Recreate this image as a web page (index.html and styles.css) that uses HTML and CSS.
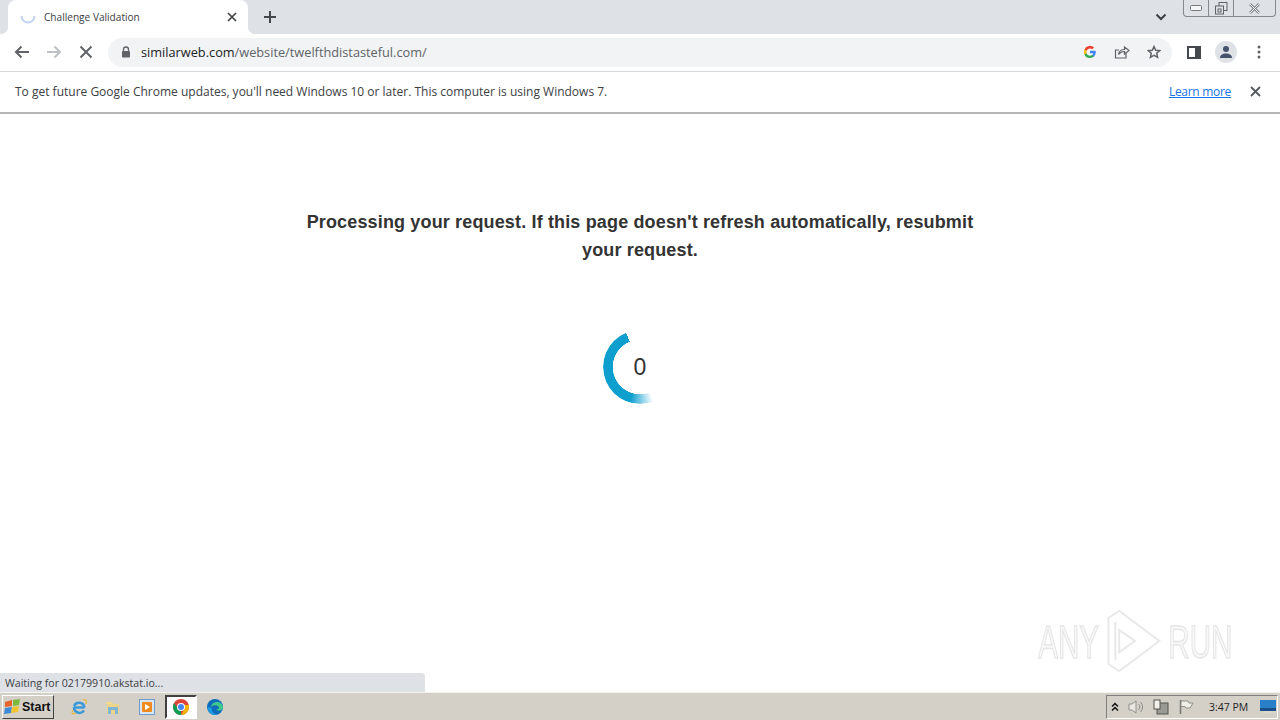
FILE: index.html
```html
<!DOCTYPE html>
<html lang="en">
<head>
  <meta charset="UTF-8" />
  <title>Challenge Validation</title>
  <link rel="stylesheet" href="styles.css">
</head>
<body>
  <div class="tabstrip">
    <div class="tab">
      <svg class="tab-spin" width="16" height="16" viewBox="0 0 16 16"><path d="M1.500 7a6.500 6.500 0 0 0 13 0" fill="none" stroke="#c3d4ee" stroke-width="2"/></svg>
      <span class="tab-title">Challenge Validation</span>
      <svg class="tab-close" width="10" height="10" viewBox="0 0 10 10"><path d="M1 1l8 8M9 1l-8 8" stroke="#3c4043" stroke-width="1.600"/></svg>
    </div>
    <svg class="new-tab" width="14" height="14" viewBox="0 0 14 14"><path d="M7 1v12M1 7h12" stroke="#45484d" stroke-width="2"/></svg>
    <svg class="tab-menu" width="12" height="8" viewBox="0 0 12 8"><path d="M1.500 1.500L6 6l4.500-4.500" fill="none" stroke="#3c4043" stroke-width="2"/></svg>
    <div class="winbtns">
      <div class="winbtn win-min"><svg width="12" height="6" viewBox="0 0 12 6"><rect x=".5" y=".5" width="11" height="5" rx="1" fill="#f4f5f7" stroke="#77797d"/></svg></div>
      <div class="winbtn win-max"><svg width="13" height="13" viewBox="0 0 13 13"><rect x="4" y=".5" width="8" height="8" fill="none" stroke="#5f6368"/><rect x=".5" y="4" width="8" height="8" fill="#dee1e6" stroke="#5f6368"/><rect x="3" y="7" width="3" height="3" fill="none" stroke="#5f6368"/></svg></div>
      <div class="winbtn win-close"><svg width="13" height="11" viewBox="0 0 13 11"><path d="M2 1l9 9M11 1l-9 9" stroke="#85888c" stroke-width="2.600"/><path d="M2 1l9 9M11 1l-9 9" stroke="#eef0f2" stroke-width="1"/></svg></div>
    </div>
  </div>

  <div class="toolbar">
    <svg class="nav-icon" width="16" height="14" viewBox="0 0 16 14"><path d="M15 7H2M7.500 1.500L2 7l5.500 5.500" fill="none" stroke="#5f6368" stroke-width="2"/></svg>
    <svg class="nav-icon" width="16" height="14" viewBox="0 0 16 14"><path d="M1 7h13M8.500 1.500L14 7l-5.500 5.500" fill="none" stroke="#bdc1c6" stroke-width="2"/></svg>
    <svg class="nav-icon" width="14" height="14" viewBox="0 0 14 14"><path d="M1.500 1.500l11 11M12.500 1.500l-11 11" stroke="#5f6368" stroke-width="2"/></svg>
    <div class="omnibox">
      <svg class="lock" width="10" height="12" viewBox="0 0 10 12"><path d="M2.500 5V3.500a2.500 2.500 0 0 1 5 0V5" fill="none" stroke="#5f6368" stroke-width="1.300"/><rect x="1" y="5" width="8" height="6.500" rx="1" fill="#5f6368"/></svg>
      <span class="url"><span class="url-host">similarweb.com</span>/website/twelfthdistasteful.com/</span>
      <svg class="omni-icon" width="14" height="14" viewBox="0 0 14 14">
        <path d="M12.800 7.100c0-.5 0-.9-.1-1.300H7v2.500h3.300a2.800 2.800 0 0 1-1.200 1.800v1.500h2a6 6 0 0 0 1.700-4.500z" fill="#4285f4"/>
        <path d="M7 13c1.600 0 3-.5 4.100-1.400l-2-1.500c-.6.400-1.300.6-2.100.6-1.600 0-2.900-1-3.400-2.500H1.500v1.600A6 6 0 0 0 7 13z" fill="#34a853"/>
        <path d="M3.600 8.200a3.600 3.600 0 0 1 0-2.400V4.200H1.500a6 6 0 0 0 0 5.600z" fill="#fbbc05"/>
        <path d="M7 3.400c.9 0 1.700.3 2.300.9L11.100 2.500A6 6 0 0 0 1.500 4.200l2.100 1.600C4.100 4.400 5.400 3.400 7 3.400z" fill="#ea4335"/>
      </svg>
      <svg class="omni-icon" width="16" height="14" viewBox="0 0 16 14"><path d="M12 8v5H1.500V5H5" fill="none" stroke="#5f6368" stroke-width="1.200"/><path d="M4.500 9.500C5 6 7.500 4.500 10.500 4.500V2L15 5.500 10.500 9V6.500C8 6.500 6 7.500 4.500 9.500z" fill="none" stroke="#5f6368" stroke-width="1.200"/></svg>
      <svg class="omni-icon" width="14" height="14" viewBox="0 0 14 14"><path d="M7 1.500l1.700 3.700 4 .4-3 2.700.9 4L7 10.300l-3.600 2 .9-4-3-2.700 4-.4z" fill="none" stroke="#5f6368" stroke-width="1.500"/></svg>
    </div>
    <svg class="side-icon" width="14" height="13" viewBox="0 0 14 13"><rect x="1" y="1" width="12" height="11" fill="#fff" stroke="#45484d" stroke-width="2"/><rect x="8" y="1" width="5" height="11" fill="#45484d"/></svg>
    <div class="avatar"><svg width="14" height="12" viewBox="0 0 14 12"><circle cx="7" cy="3" r="3" fill="#45526b"/><path d="M1 12c0-3 2.500-4.500 6-4.500s6 1.500 6 4.500z" fill="#45526b"/></svg></div>
    <svg class="kebab" width="4" height="14" viewBox="0 0 4 14"><circle cx="2" cy="2" r="1.500" fill="#5f6368"/><circle cx="2" cy="7" r="1.500" fill="#5f6368"/><circle cx="2" cy="12" r="1.500" fill="#5f6368"/></svg>
  </div>

  <div class="infobar">
    <span class="info-text">To get future Google Chrome updates, you'll need Windows 10 or later. This computer is using Windows 7.</span>
    <a class="info-link" href="#">Learn more</a>
    <svg class="info-close" width="11" height="11" viewBox="0 0 11 11"><path d="M1 1l9 9M10 1l-9 9" stroke="#55585c" stroke-width="1.800"/></svg>
  </div>

  <main class="page">
    <h1 class="message">Processing your request. If this page doesn't refresh automatically, resubmit your request.</h1>
    <div class="spinner">
      <div class="spinner-ring"></div>
      <span class="spinner-count">0</span>
    </div>

    <div class="watermark">
      <span>ANY</span>
      <svg width="90" height="62" viewBox="0 0 58 62" preserveAspectRatio="none"><path d="M3 8L14 1l41 30-41 30-11-7zM10 12v38M14 20v22l16-11z" fill="none" stroke="#e8e8e8" stroke-width="2"/></svg>
      <span>RUN</span>
    </div>
    <div class="status">Waiting for 02179910.akstat.io...</div>
  </main>

  <div class="taskbar">
    <div class="start">
      <svg width="17" height="15" viewBox="0 0 17 15"><path d="M1 3l7-2v6l-7 1z" fill="#e8622a"/><path d="M9 1l7-1-1 6-6 1z" fill="#7db93c"/><path d="M1 9l7-1-1 6-7 1z" fill="#3b8bd8"/><path d="M8 8l7-1-1 6-7 1z" fill="#f2c230"/></svg>
      <span>Start</span>
    </div>
    <div class="quick">
      <div class="task-icon"><svg width="18" height="18" viewBox="0 0 18 18"><path d="M14.500 9.500H4M4 8a5.500 5.500 0 0 1 10.500 1.500M14 12.500A5.500 5.500 0 0 1 4 9" fill="none" stroke="#3a9ad9" stroke-width="2.500"/><path d="M13 2c3-1 4 0 3 4M3 12c-2 3-1 5 3 3" fill="none" stroke="#e6b73a" stroke-width="1.200"/></svg></div>
      <div class="task-icon"><svg width="16" height="16" viewBox="0 0 16 16"><path d="M2 5h12v10H2z" fill="#e9d48a"/><path d="M1 3h6l1 2H1z" fill="#f0d98a"/><path d="M3 8h10v7h-3v-4H6v4H3z" fill="#7fb6d6"/></svg></div>
      <div class="task-icon"><svg width="16" height="16" viewBox="0 0 16 16"><rect x=".5" y=".5" width="15" height="15" fill="#d8e6f4" stroke="#6f9ccc"/><rect x="3" y="3" width="10" height="10" rx="1" fill="#f08a1d"/><path d="M6 5l5 3-5 3z" fill="#fff"/></svg></div>
      <div class="task-icon task-active"><svg width="16" height="16" viewBox="0 0 16 16"><circle cx="8" cy="8" r="8" fill="#db4437"/><path d="M8 16a8 8 0 0 1-6.900-12L5 10l3 1z" fill="#0f9d58"/><path d="M16 8a8 8 0 0 1-8 8l3.500-6-.5-4h5.500c-.3.600 0 1.300 0 2z" fill="#f4b400"/><circle cx="8" cy="8" r="4" fill="#fff"/><circle cx="8" cy="8" r="3" fill="#4285f4"/></svg></div>
      <div class="task-icon"><svg width="16" height="16" viewBox="0 0 16 16"><circle cx="8" cy="8" r="8" fill="#0f6cbd"/><path d="M16 9c0-4-3-6-6-6-4 0-6 3-6 5 2-2.500 7-2.500 8 .5 0 1-1 2-3 2 2 2 7 1 7-1.500z" fill="#3fc98b"/><path d="M5 9c-1 3 1 6 5 6.500C6 17 0 14 1 8z" fill="#1b9de2"/></svg></div>
    </div>
    <div class="tray">
      <svg width="8" height="10" viewBox="0 0 8 10"><path d="M1 4.500L4 1.500l3 3M1 8.500l3-3 3 3" fill="none" stroke="#111" stroke-width="1.500"/></svg>
      <svg width="16" height="16" viewBox="0 0 16 16"><path d="M1 5h3l4-3v12l-4-3H1z" fill="#e8e6e0" stroke="#8f8f8a"/><path d="M10.500 5a4 4 0 0 1 0 6M12.500 3a7 7 0 0 1 0 10" fill="none" stroke="#8f8f8a"/></svg>
      <svg width="16" height="16" viewBox="0 0 16 16"><rect x="4" y="4" width="11" height="11" fill="#9a9a94" stroke="#55554f"/><rect x="1" y="1" width="6" height="9" fill="#f2f1ec" stroke="#55554f"/></svg>
      <svg width="16" height="16" viewBox="0 0 16 16"><path d="M2.500 1v14" stroke="#77776f" stroke-width="1.500"/><path d="M3 2h7l1 2h4l-3 5H8L7 7.500H3z" fill="#efeee8" stroke="#8f8f88"/></svg>
      <span class="clock">3:47 PM</span>
      <svg width="16" height="14" viewBox="0 0 16 14"><rect width="16" height="11" fill="#2a7fc9"/><rect y="8" width="16" height="3" fill="#1b4f8a"/><rect x="2" y="11" width="14" height="2" fill="#d9d6ce"/></svg>
    </div>
  </div>
</body>
</html>
```

FILE: styles.css
```css
* {
  box-sizing: border-box;
}

body {
  margin: 0;
  display: flex;
  flex-direction: column;
  height: 720px;
  overflow: hidden;
  background: #fff;
  font-family: "Open Sans", "Liberation Sans", sans-serif;
}

svg {
  display: block;
  flex-shrink: 0;
}

.tabstrip {
  height: 34px;
  background: #dee1e6;
  display: flex;
  align-items: flex-start;
  padding-left: 8px;
}

.tab {
  position: relative;
  width: 240px;
  height: 34px;
  background: #fff;
  border-radius: 8px 8px 0 0;
  display: flex;
  align-items: center;
  padding: 0 11px 0 12px;
  font-size: 10.100px;
  color: #3c4043;
}

.tab::before, .tab::after {
  content: "";
  position: absolute;
  bottom: 0;
  width: 8px;
  height: 8px;
}

.tab::before {
  left: -8px;
  background: radial-gradient(circle at 0 0, #dee1e6 8px, #fff 8.500px);
}

.tab::after {
  right: -8px;
  background: radial-gradient(circle at 100% 0, #dee1e6 8px, #fff 8.500px);
}

.tab-spin {
  margin-right: 8px;
}

.tab-title {
  flex: 1;
}

.new-tab {
  margin: 10px 0 0 15px;
}

.tab-menu {
  margin: 13px 0 0 auto;
}

.winbtns {
  display: flex;
  width: 93px;
  height: 17px;
  margin: 0 4px 0 16px;
  border: 1px solid #85888c;
  border-top: 0;
  border-radius: 0 0 4px 4px;
}

.winbtn {
  display: flex;
  align-items: center;
  justify-content: center;
  width: 25px;
  border-right: 1px solid #85888c;
}

.win-close {
  flex: 1;
  border-right: 0;
}

.toolbar {
  height: 38px;
  display: flex;
  align-items: center;
  border-bottom: 1px solid #d6d8dc;
  padding: 0 19px 1px 14px;
}

.toolbar .nav-icon {
  margin-right: 16px;
}

.toolbar .nav-icon:nth-child(3) {
  margin: 0 15px 0 1px;
}

.omnibox {
  flex: 1;
  height: 29px;
  background: #f1f3f4;
  border-radius: 15px;
  display: flex;
  align-items: center;
  padding: 0 11px 0 13px;
  margin-right: 15px;
}

.lock {
  margin-right: 10px;
}

.url {
  flex: 1;
  font-size: 12.750px;
  color: #5f6368;
  white-space: nowrap;
}

.url-host {
  color: #202124;
}

.omni-icon {
  margin-left: 17px;
}

.side-icon {
  margin-right: 14px;
}

.avatar {
  width: 22px;
  height: 22px;
  border-radius: 50%;
  background: #dee1e6;
  display: flex;
  align-items: center;
  justify-content: center;
  margin-right: 20px;
}

.infobar {
  height: 42px;
  display: flex;
  align-items: center;
  padding: 0 19px 2px 15px;
  border-bottom: 2px solid #b5b5b5;
  font-size: 12px;
  color: #3c4043;
}

.info-text {
  flex: 1;
}

.info-link {
  color: #1a73e8;
  letter-spacing: -.3px;
  margin-right: 19px;
}

.page {
  flex: 1;
  position: relative;
  display: flex;
  flex-direction: column;
  align-items: center;
  padding-top: 94px;
}

.message {
  width: 680px;
  margin: 0;
  font-family: "Liberation Sans", Arial, sans-serif;
  font-size: 18px;
  letter-spacing: .15px;
  line-height: 28px;
  font-weight: bold;
  color: #333;
  text-align: center;
}

.spinner {
  position: relative;
  width: 74px;
  height: 74px;
  margin-top: 66px;
  display: flex;
  align-items: center;
  justify-content: center;
}

.spinner-ring {
  position: absolute;
  inset: 0;
  border-radius: 50%;
  background: conic-gradient(from 158deg, transparent 0deg, #0f9fcf 38deg, #0f9fcf 180deg, transparent 180deg);
  -webkit-mask: radial-gradient(closest-side, transparent 27px, #000 27.500px);
  mask: radial-gradient(closest-side, transparent 27px, #000 27.500px);
}

.spinner-count {
  font-family: "Liberation Sans", Arial, sans-serif;
  font-size: 23px;
  color: #333;
}

.status {
  position: absolute;
  left: 0;
  bottom: 0;
  width: 425px;
  height: 19px;
  background: #dee1e6;
  border-top-right-radius: 4px;
  padding-left: 5px;
  font-size: 10.600px;
  line-height: 20px;
  color: #3c4043;
}

.watermark {
  position: absolute;
  right: 48px;
  bottom: 20px;
  display: flex;
  align-items: center;
  gap: 10px;
  font-family: "Liberation Sans", Arial, sans-serif;
  font-size: 47px;
  color: #f8f8f8;
  -webkit-text-stroke: 1.500px #e6e6e6;
  transform: scaleX(.63);
  transform-origin: right center;
}

.taskbar {
  height: 28px;
  background: #d4d0c8;
  border-top: 1px solid #f4f2ec;
  display: flex;
  align-items: center;
  padding: 0 2px;
}

.start {
  width: 52px;
  height: 24px;
  display: flex;
  align-items: center;
  gap: 1px;
  padding-left: 1px;
  background: #d4d0c8;
  border: 1px solid;
  border-color: #fff #404040 #404040 #fff;
  font-family: "Liberation Sans", Arial, sans-serif;
  font-size: 12.500px;
  font-weight: bold;
  color: #111;
}

.quick {
  display: flex;
  align-items: center;
  gap: 2px;
  margin-left: 9px;
}

.task-icon {
  width: 32px;
  height: 24px;
  display: flex;
  align-items: center;
  justify-content: center;
}

.task-active {
  background: #fff;
  border: 2px solid;
  border-color: #404040 #fff #fff #404040;
}

.tray {
  margin-left: auto;
  width: 172px;
  height: 24px;
  display: flex;
  align-items: center;
  gap: 9px;
  padding: 0 1px 0 4px;
  border: 1px solid;
  border-color: #808080 #fff #fff #808080;
}

.clock {
  margin: 0 auto 0 6px;
  font-size: 10.500px;
  color: #222;
}
```
